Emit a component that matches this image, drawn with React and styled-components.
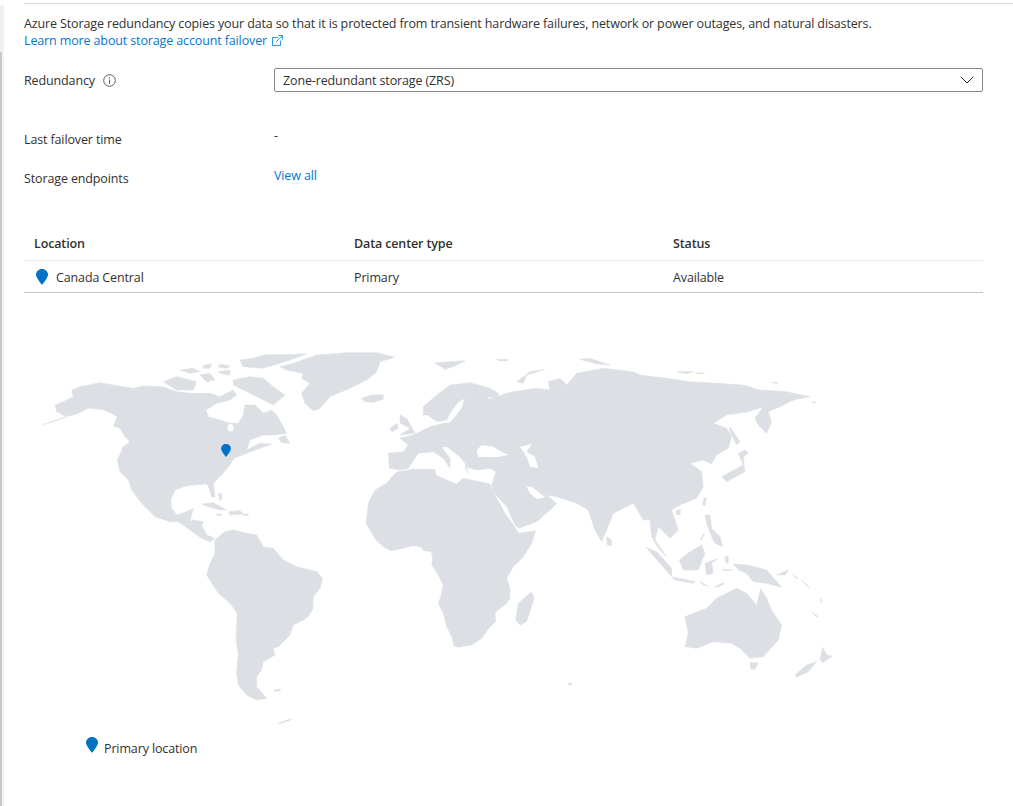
import React from 'react'
import styled, { createGlobalStyle } from 'styled-components'

const GlobalStyle = createGlobalStyle`
  html, body { margin: 0; padding: 0; background: #fff; }
  body {
    font-family: "Open Sans", "Noto Sans", "Liberation Sans", sans-serif;
    font-size: 12.5px;
    letter-spacing: -0.13px;
    color: #323130;
  }
`

// traced against the reference, 3x crop coordinates
const WEST_LAND = [
  'M40 254L100 232L140 222L175 205L215 208L240 218L262 230L250 258L270 265L285 290L300 305L280 320L262 360L270 395L295 420L305 450L335 490L360 515L375 530L420 545L445 545L480 570L515 595L540 605L555 595L530 585L515 555L520 545L490 540L480 545L490 505L470 515L440 525L425 505L422 480L435 450L470 437L530 432L540 450L545 472L555 470L550 430L575 405L600 375L612 355L650 340L690 325L725 312L690 310L650 330L660 300L700 285L735 285L770 280L760 260L740 225L725 210L700 220L675 195L645 195L640 225L625 250L600 250L570 240L535 230L528 210L560 190L600 180L620 165L610 150L590 160L570 170L540 160L480 160L440 155L400 140L340 138L310 145L250 135L210 128L150 140L125 150L130 170L100 185L75 195L80 215L110 230L70 245Z',
  'M610 120L660 110L700 115L730 140L765 165L730 195L700 180L670 165L640 150L610 135Z',
  'M400 125L440 110L500 125L490 150L440 150L415 135Z',
  'M450 90L490 85L510 95L480 100Z',
  'M520 75L545 72L540 85L520 85Z',
  'M570 72L600 78L590 85L565 82Z',
  'M565 95L600 90L600 105L570 100Z',
  'M510 105L540 100L555 120L530 125Z',
  'M630 60L670 55L700 45L830 42L780 60L700 85L640 80Z',
  'M750 80L790 70L860 45L950 38L1040 38L1095 52L1050 65L1040 95L1010 120L960 145L900 170L870 205L850 212L825 190L815 160L840 130L815 115L820 100L770 90Z',
  'M995 175L1025 165L1060 165L1060 178L1030 187L1005 185Z',
  'M745 295L765 285L780 310L755 308Z',
  'M515 492L550 488L590 510L570 510L530 498Z',
  'M595 515L630 512L640 522L600 525Z',
  'M640 522L655 523L655 527L640 526Z',
  'M560 522L575 522L575 526L560 526Z',
  'M565 462L575 460L575 480L570 480Z',
  'M555 600L585 575L610 570L650 580L680 585L700 620L730 625L760 660L800 680L860 695L878 715L870 745L850 770L848 810L830 835L790 855L780 885L745 920L730 925L735 945L700 965L695 990L680 1010L680 1040L710 1075L680 1080L650 1065L625 1035L620 1000L625 940L618 900L622 820L600 790L565 760L530 705L540 670L555 640Z',
  'M730 1050L750 1047L752 1052L732 1054Z',
  'M745 1150L782 1136L782 1140L750 1151Z',
]

const EAST_LAND = [
  'M115 340L160 335L175 315L150 295L190 285L240 260L260 255L280 250L300 248L320 225L335 205L345 175L325 185L300 220L290 240L265 245L245 235L235 225L220 225L220 200L260 165L300 135L360 128L420 145L445 160L445 175L410 170L420 178L470 160L490 155L560 145L600 150L595 125L630 115L650 135L680 100L760 85L850 95L870 105L950 115L1020 125L1100 130L1180 135L1230 150L1310 155L1380 170L1340 178L1320 185L1290 200L1255 215L1265 245L1250 280L1225 255L1215 235L1240 200L1195 215L1130 225L1090 250L1130 265L1145 290L1135 325L1100 345L1085 372L1060 360L1020 370L1055 395L1060 440L1040 475L990 495L965 510L985 570L960 595L925 560L915 600L950 650L925 625L905 590L900 540L880 540L850 490L790 520L770 570L755 605L735 570L715 510L680 490L620 470L590 465L620 490L600 510L560 545L505 565L495 555L470 500L430 455L425 435L438 395L420 385L380 390L345 380L355 400L345 370L330 350L290 320L275 322L300 355L300 385L280 355L250 335L205 340L175 385L150 390L118 385Z',
  'M145 395L135 400L110 430L75 450L55 490L52 520L48 550L60 570L78 600L100 620L122 632L160 625L190 617L212 620L222 632L245 635L248 660L245 675L262 700L280 735L272 770L265 790L280 820L290 860L305 890L312 918L325 922L365 915L395 895L420 860L437 845L435 818L470 790L480 775L480 745L470 715L490 680L520 650L545 610L557 572L505 580L497 565L465 520L430 455L420 432L390 425L340 415L320 432L290 420L258 405L255 388L190 388Z',
  'M545 755L552 775L530 845L510 855L497 840L505 790Z',
  'M770 590L785 600L785 618L772 615Z',
  'M150 225L170 235L195 280L150 285L180 265L150 250Z',
  'M120 265L140 250L145 265L125 275Z',
  'M255 68L345 62L310 80L285 88Z',
  'M500 125L540 95L585 88L530 105L520 130Z',
  'M440 58L475 58L470 63L450 63Z',
  'M690 58L720 55L780 75L740 72Z',
  'M980 95L1030 95L1010 101Z',
  'M1035 98L1065 99L1050 102Z',
  'M1265 127L1285 127L1280 131Z',
  'M1385 184L1400 188L1390 189Z',
  'M1115 410L1180 375L1165 340L1185 330L1195 340L1180 350L1185 395L1130 425Z',
  'M1140 260L1170 305L1160 315L1140 275Z',
  'M1062 475L1070 472L1065 497L1058 495Z',
  'M978 512L992 508L990 524L980 524Z',
  'M1065 525L1080 525L1085 565L1110 590L1118 620L1095 610L1085 590L1070 550Z',
  'M1050 600L1062 580L1064 582L1052 602Z',
  'M1055 615L1065 640L1045 690L1000 690L988 660L1020 635Z',
  'M1065 670L1105 655L1085 670L1090 700L1070 705Z',
  'M888 622L920 635L965 685L965 710L930 670Z',
  'M965 710L1035 725L1030 730L975 720Z',
  'M1150 672L1195 675L1250 690L1295 742L1250 730L1210 725L1190 700L1165 690Z',
  'M1095 740L1120 728L1122 732L1100 742Z',
  'M1050 725L1075 738L1060 736Z',
  'M1125 650L1135 650L1135 670L1128 668Z',
  'M1115 688L1150 690L1125 692Z',
  'M1280 705L1315 690L1305 705Z',
  'M1330 705L1345 715L1340 717Z',
  'M1355 720L1380 745L1372 740Z',
  'M1412 773L1417 788L1413 788Z',
  'M1385 815L1405 830L1398 830Z',
  'M1005 830L1070 805L1100 775L1160 745L1190 760L1220 795L1232 745L1250 775L1265 810L1295 855L1285 900L1240 950L1200 955L1170 925L1145 910L1090 905L1040 925L1005 920L1015 880Z',
  'M1200 968L1225 968L1215 988L1203 988Z',
  'M1418 922L1430 945L1448 948L1420 968L1410 960Z',
  'M1400 965L1375 995L1340 1012L1335 1005L1370 975Z',
  'M655 1028L668 1031L658 1036Z',
]

const EAST_WATER = [
  'M380 330L395 315L430 320L445 330L475 345L440 352L385 350Z',
  'M510 320L545 312L530 335L555 350L565 385L540 380L530 350Z',
  'M530 440L545 440L585 472L560 478L540 460Z',
]

const Pin = ({ size = 12 }) => (
  <PinIcon $size={size} viewBox="0 0 12 16" aria-hidden="true">
    <path d="M6 0C2.7 0 0 2.5 0 5.6C0 9 6 16 6 16S12 9 12 5.6C12 2.5 9.3 0 6 0Z" />
  </PinIcon>
)

const rows = [{ location: 'Canada Central', type: 'Primary', status: 'Available' }]

const App = () => {
  return (
    <>
      <GlobalStyle />
      <Page>
        <Rail />
        <Content>
          <Intro>
            Azure Storage redundancy copies your data so that it is protected from transient hardware failures, network or power outages, and natural disasters.
            <br />
            <LinkText href="#">
              Learn more about storage account failover
              <svg width="11" height="11" viewBox="0 0 11 11" fill="none" stroke="currentColor" strokeWidth=".8">
                <path d="M6 2.5H.5V10.5H8.5V5.5" />
                <path d="M4 7L10 1M6.5.5H10.5V4.5" />
              </svg>
            </LinkText>
          </Intro>

          <Field $top={19} $height={24}>
            <Label>
              Redundancy
              <svg width="13" height="13" viewBox="0 0 13 13" fill="none" stroke="#605e5c">
                <circle cx="6.5" cy="6.5" r="5.8" />
                <path d="M6.5 5.6V9.8M6.5 3.4V4.6" />
              </svg>
            </Label>
            <Select>
              Zone-redundant storage (ZRS)
              <svg width="14" height="8" viewBox="0 0 14 8" fill="none" stroke="#323130">
                <path d="M.7.7L7 7L13.3.7" />
              </svg>
            </Select>
          </Field>

          <Field $top={36} $height={22}>
            <Label>Last failover time</Label>
            <Value $shift={-4}>-</Value>
          </Field>

          <Field $top={17} $height={22}>
            <Label>Storage endpoints</Label>
            <Value $shift={-3}><LinkText href="#">View all</LinkText></Value>
          </Field>

          <Table>
            <HeadRow>
              <span>Location</span>
              <span>Data center type</span>
              <span>Status</span>
            </HeadRow>
            {rows.map((r) => (
              <BodyRow key={r.location}>
                <LocationCell><Pin />{r.location}</LocationCell>
                <span>{r.type}</span>
                <span>{r.status}</span>
              </BodyRow>
            ))}
          </Table>

          <MapBox>
            <svg width="810" height="395" viewBox="0 0 810 395">
              <g transform="scale(.3333)" fill="#dcdfe4" stroke="#dcdfe4" strokeWidth="1.5" strokeLinejoin="round">
                {WEST_LAND.map((d, i) => <path key={i} d={d} />)}
                <ellipse cx="602" cy="263" rx="9" ry="11" fill="#fff" stroke="none" />
              </g>
              <g transform="translate(320 0) scale(.3333)" fill="#dcdfe4" stroke="#dcdfe4" strokeWidth="1.5" strokeLinejoin="round">
                {EAST_LAND.map((d, i) => <path key={i} d={d} />)}
                {EAST_WATER.map((d, i) => <path key={i} d={d} fill="#fff" stroke="none" />)}
              </g>
            </svg>
            <MapMarker><Pin size={10} /></MapMarker>
          </MapBox>

          <Legend><Pin />Primary location</Legend>
        </Content>
      </Page>
    </>
  )
}

const Page = styled.div`
  position: relative;
  width: 1013px;
  height: 806px;
  overflow: hidden;
`

const Rail = styled.div`
  position: absolute;
  left: 0;
  top: 5px;
  bottom: 0;
  width: 4px;
  background: linear-gradient(#f0f0f0 47px, transparent 47px),
    linear-gradient(90deg, #c8c8c8 2px, #f4f4f4 2px);
`

const Content = styled.main`
  margin-left: 24px;
  padding-top: 3px;
  line-height: 17px;
`

const Intro = styled.div`
  border-top: 1px solid #d9d9d9;
  padding-top: 11px;
`

const LinkText = styled.a`
  color: #0078d4;
  text-decoration: none;
  svg { margin-left: 5px; vertical-align: -1px; }
`

const Field = styled.div`
  display: grid;
  grid-template-columns: 250px 709px;
  align-items: center;
  height: ${(p) => p.$height}px;
  margin-top: ${(p) => p.$top}px;
`

const Label = styled.div`
  display: flex;
  align-items: center;
  gap: 8px;
`

const Select = styled.div`
  display: flex;
  align-items: center;
  justify-content: space-between;
  box-sizing: border-box;
  height: 24px;
  padding: 0 8px;
  border: 1px solid #8a8886;
  border-radius: 2px;
`

const Value = styled.div`
  transform: translateY(${(p) => p.$shift}px);
`

const Table = styled.div`
  width: 959px;
  margin-top: 40px;
`

const columns = `
  display: grid;
  grid-template-columns: 320px 319px 1fr;
  align-items: center;
  padding-left: 10px;
`

const HeadRow = styled.div`
  ${columns}
  height: 28px;
  padding-bottom: 3px;
  font-weight: 600;
  border-bottom: 1px solid #edebe9;
`

const BodyRow = styled.div`
  ${columns}
  height: 30px;
  padding-top: 1px;
  border-bottom: 1px solid #c8c6c4;
`

const LocationCell = styled.span`
  display: flex;
  align-items: center;
  gap: 8px;
  margin-left: 2px;
`

const PinIcon = styled.svg`
  display: block;
  width: ${(p) => p.$size}px;
  height: ${(p) => Math.round((p.$size * 4) / 3)}px;
  fill: #0072c6;
`

const MapBox = styled.div`
  position: relative;
  width: 810px;
  height: 395px;
  margin: 47px 0 0 6px;
`

const MapMarker = styled.div`
  position: absolute;
  left: 191px;
  top: 104px;
`

const Legend = styled.div`
  display: flex;
  align-items: flex-start;
  gap: 6px;
  margin: 5px 0 0 62px;
  svg { margin-top: -3px; }
`

export default App
